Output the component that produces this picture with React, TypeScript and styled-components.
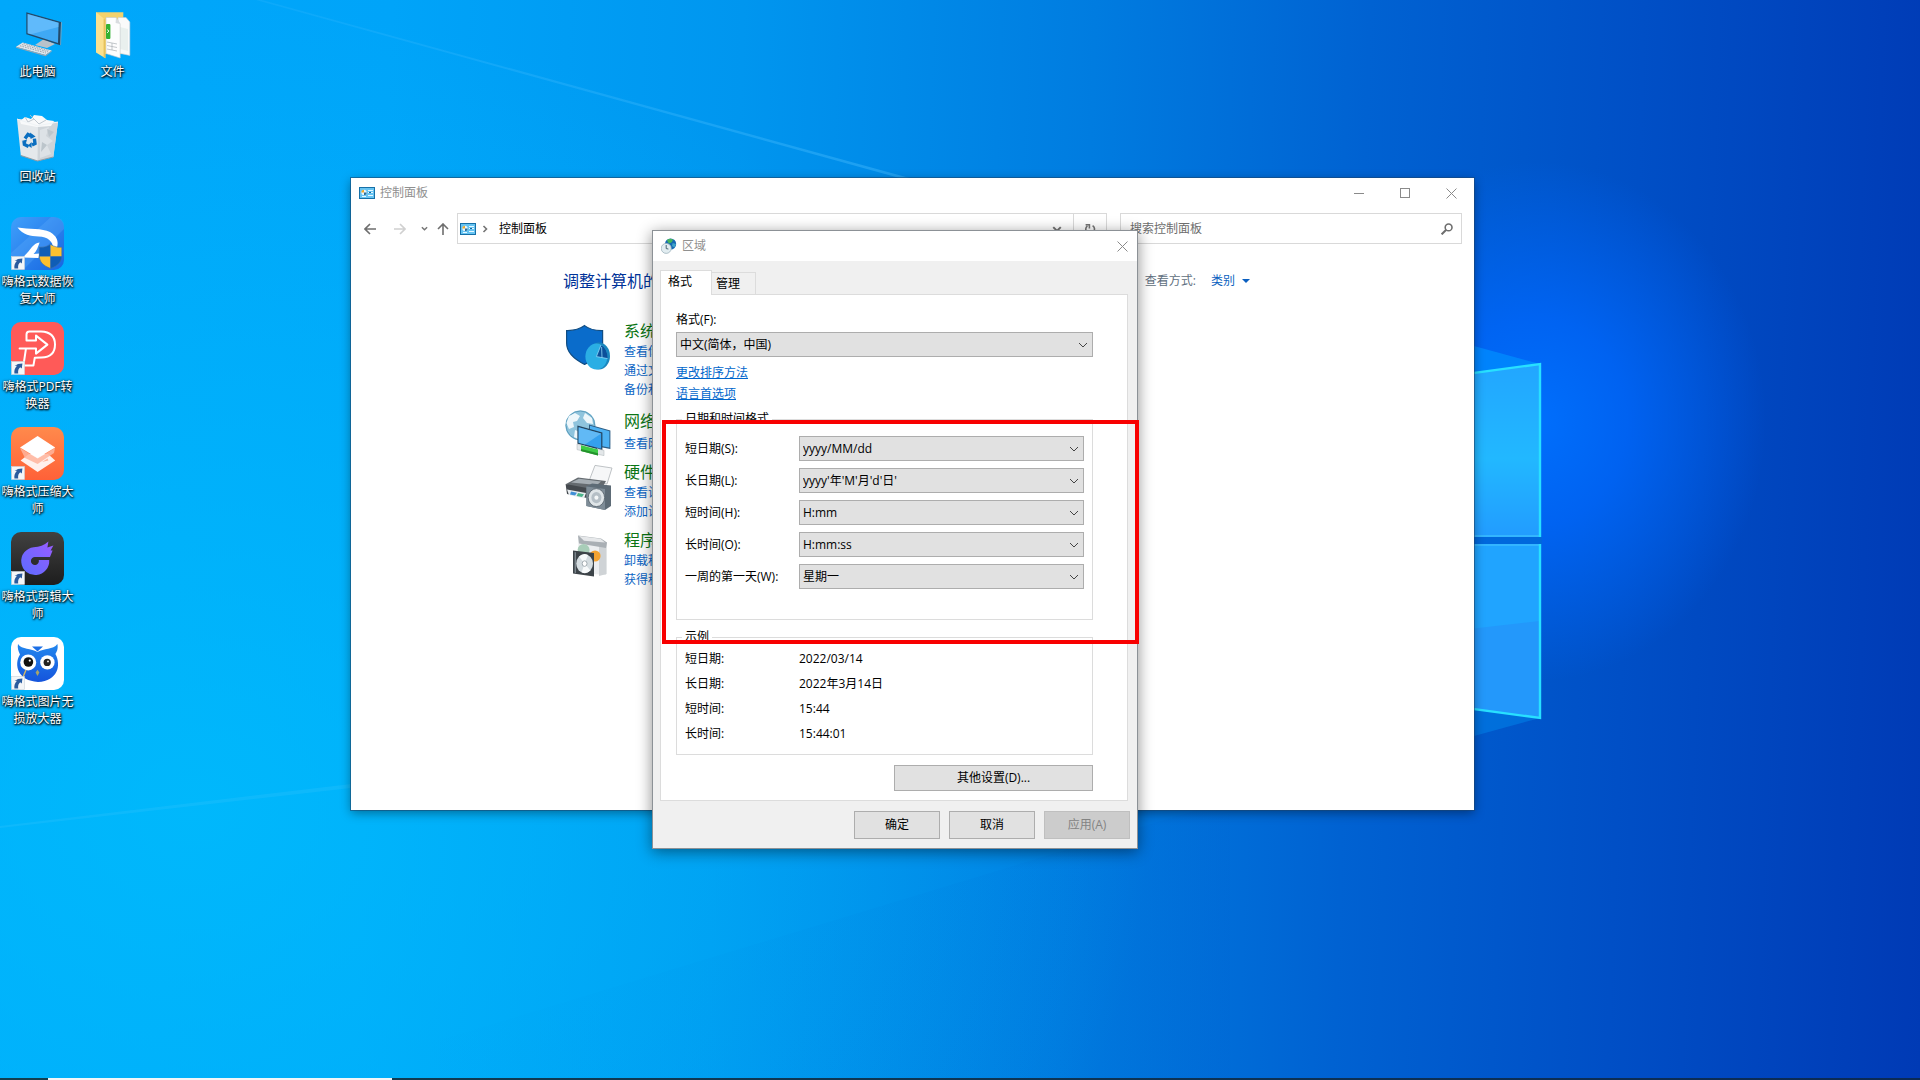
import React from "react";
import styled, { createGlobalStyle, css } from "styled-components";

const GlobalStyle = createGlobalStyle`
  *, *::before, *::after { box-sizing: border-box; }
  body {
    margin: 0;
    font-family: "Open Sans", "Noto Sans CJK SC", sans-serif;
    font-size: 12px;
    line-height: 20px;
    color: #000;
  }
  button, input, select {
    font: inherit;
    color: inherit;
    margin: 0;
    padding: 0;
    border: 0;
    background: none;
    border-radius: 0;
    appearance: none;
    outline: none;
  }
  a { text-decoration: none; }
  svg { display: block; }
`;

/* ---------- desktop ---------- */

const Desktop = styled.main`
  position: relative;
  display: flex;
  flex-direction: column;
  height: 100vh;
  overflow: hidden;
  background:
    radial-gradient(ellipse 230px 260px at 80% 39%, rgba(0, 112, 255, 0.95) 0, rgba(0, 104, 255, 0.75) 40%, rgba(0, 90, 240, 0) 100%),
    radial-gradient(ellipse 50% 75% at 10% 75%, rgba(0, 190, 252, 0.75), rgba(0, 184, 250, 0) 100%),
    linear-gradient(92deg, #00a8fb 0%, #00a4f9 20%, #0096ef 38%, #007ce0 56%, #0062d2 70%, #004fc6 84%, #003ab5 100%);
`;

const Wallpaper = styled.svg`
  position: absolute;
  inset: 0;
  width: 100%;
  height: 100%;
`;

const IconGrid = styled.nav`
  position: relative;
  flex: 1;
  display: grid;
  grid-auto-flow: column;
  grid-template-rows: repeat(7, 105px);
  grid-auto-columns: 75px;
  padding-top: 7px;
`;

const Shortcut = styled.a<{ $column: number }>`
  grid-column: ${(p) => p.$column};
  display: flex;
  flex-direction: column;
  align-items: center;
  gap: 3px;
  color: #fff;
  line-height: 17px;
  text-align: center;
  text-shadow: 1px 1px 2px #000, 0 1px 2px rgba(0, 0, 0, 0.8), 0 0 3px rgba(0, 0, 0, 0.6);
`;

const Taskbar = styled.footer`
  position: relative;
  height: 2px;
  padding-left: 48px;
  background: linear-gradient(90deg, #123f4f, #0b2a55);
`;

const TaskbarSearch = styled.div`
  width: 344px;
  height: 2px;
  background: #f2f6f8;
`;

/* ---------- windows ---------- */

const Window = styled.section`
  position: absolute;
  left: 351px;
  top: 178px;
  width: 1123px;
  min-height: 632px;
  background: #fff;
  box-shadow: 0 0 0 1px rgba(30, 70, 110, 0.55), 0 3px 10px rgba(0, 0, 0, 0.4);
`;

const TitleBar = styled.header<{ $inset: number }>`
  display: flex;
  align-items: center;
  height: 30px;
  padding-left: ${(p) => p.$inset}px;
  background: #fff;
  color: #909090;
`;

const Title = styled.h1`
  flex: 1;
  margin: 0 0 0 5px;
  font-size: 12px;
  font-weight: 400;
`;

const CaptionButton = styled.button<{ $width: number }>`
  display: grid;
  place-items: center;
  width: ${(p) => p.$width}px;
  height: 28px;
`;

const Toolbar = styled.div`
  display: flex;
  align-items: center;
  height: 31px;
  margin: 5px 12px 0 9px;
`;

const NavButton = styled.button<{ $width: number }>`
  display: grid;
  place-items: center;
  width: ${(p) => p.$width}px;
  height: 31px;
`;

const AddressBar = styled.div`
  flex: 1;
  display: flex;
  align-items: center;
  height: 31px;
  margin: 0 13px 0 0;
  padding-left: 2px;
  border: 1px solid #d9d9d9;
`;

const Crumb = styled.a`
  flex: 1;
  margin-left: 5px;
  color: #000;
`;

const BarButton = styled(NavButton)<{ $divided?: boolean }>`
  height: 29px;
  ${(p) => p.$divided && css`border-left: 1px solid #d9d9d9;`}
`;

const SearchBox = styled.label`
  display: flex;
  align-items: center;
  width: 342px;
  height: 31px;
  padding: 0 8px 0 9px;
  border: 1px solid #d9d9d9;
`;

const SearchInput = styled.input`
  flex: 1;
  min-width: 0;
  &::placeholder { color: #6d6d6d; opacity: 1; }
`;

const Content = styled.div`
  padding: 26px 224px 0 212px;
`;

const ContentHead = styled.div`
  display: flex;
  align-items: center;
  justify-content: space-between;
`;

const PageTitle = styled.h2`
  margin: 0;
  font-size: 16px;
  line-height: 22px;
  font-weight: 400;
  color: #003399;
`;

const ViewBy = styled.div`
  display: flex;
  align-items: center;
  gap: 15px;
  color: #5f6f80;
`;

const ViewButton = styled.button`
  display: flex;
  align-items: center;
  gap: 7px;
  color: #0a5fc0;
`;

const CategoryList = styled.ul`
  display: grid;
  gap: 9px;
  margin: 29px 0 0;
  padding: 0;
  list-style: none;
`;

const Category = styled.li`
  display: grid;
  grid-template-columns: 46px 1fr;
  column-gap: 13px;
  align-items: start;
  padding-left: 2px;
`;

const CategoryTitle = styled.a`
  display: block;
  font-size: 16px;
  line-height: 21px;
  color: #0b7514;
`;

const CategoryText = styled.div<{ $loose?: boolean }>`
  ${(p) => p.$loose && css`
    padding-top: 3px;
    ${CategoryTitle} { margin-bottom: 2px; }
  `}
`;

const TaskLink = styled.a`
  display: block;
  line-height: 19px;
  color: #0a64c4;
`;

/* ---------- region dialog ---------- */

const Dialog = styled.section`
  position: absolute;
  left: 652px;
  top: 230px;
  width: 486px;
  border: 1px solid #8c9196;
  background: #f0f0f0;
  box-shadow: 0 3px 14px rgba(0, 0, 0, 0.45);
`;

const TabList = styled.div`
  position: relative;
  display: flex;
  align-items: flex-end;
  padding: 9px 7px 0;
`;

const Tab = styled.button<{ $active?: boolean }>`
  height: 22px;
  padding: 0 15px 0 4px;
  border: 1px solid #dcdcdc;
  border-width: 1px 1px 0 0;
  text-align: left;
  ${(p) => p.$active && css`
    height: 25px;
    margin-bottom: -1px;
    padding: 0 19px 2px 7px;
    border-width: 1px 1px 0 1px;
    background: #fff;
  `}
`;

const TabPanel = styled.div`
  display: flex;
  flex-direction: column;
  margin: 0 9px 0 7px;
  padding: 15px 34px 9px 15px;
  border: 1px solid #dcdcdc;
  background: #fff;
`;

const SelectWrap = styled.span`
  display: grid;
  grid-template-columns: 1fr 20px;
  align-items: center;
  height: 25px;
`;

const Select = styled.select`
  grid-area: 1 / 1 / 2 / 3;
  width: 100%;
  height: 25px;
  padding: 0 20px 0 3px;
  border: 1px solid #adadad;
  background: #e1e1e1;
`;

const SelectArrow = styled.svg`
  grid-area: 1 / 2;
  justify-self: center;
  pointer-events: none;
`;

const LocaleField = styled.div`
  display: grid;
  gap: 2px;
`;

const LinkStack = styled.div`
  display: flex;
  flex-direction: column;
  align-items: flex-start;
  margin-top: 5px;
  line-height: 21px;
`;

const TextLink = styled.a`
  color: #0066cc;
  text-decoration: underline;
`;

const Group = styled.fieldset<{ $gap: number }>`
  min-width: 0;
  margin: ${(p) => p.$gap}px 0 0;
  padding: 0;
  border: 1px solid #dcdcdc;
`;

const Legend = styled.legend`
  margin-left: 5px;
  padding: 0 3px;
  line-height: 16px;
`;

const FormatRows = styled.div`
  display: grid;
  grid-template-columns: 114px 1fr;
  row-gap: 7px;
  align-items: center;
  padding: 9px 8px 30px;
`;

const SampleRows = styled.dl`
  display: grid;
  grid-template-columns: 114px 1fr;
  margin: 0;
  padding: 1px 8px 8px;
  line-height: 25px;
`;

const SampleValue = styled.dd`
  margin: 0;
`;

const PushButton = styled.button<{ $width: number; $height: number }>`
  width: ${(p) => p.$width}px;
  height: ${(p) => p.$height}px;
  border: 1px solid #adadad;
  background: #e1e1e1;
  &:disabled { background: #cccccc; border-color: #bfbfbf; color: #838383; }
`;

const MoreRow = styled.div`
  display: flex;
  justify-content: flex-end;
  margin-top: 10px;
`;

const DialogFooter = styled.footer`
  display: flex;
  justify-content: flex-end;
  gap: 9px;
  padding: 10px 7px 9px;
`;

const Highlight = styled.div`
  position: absolute;
  left: 662px;
  top: 420px;
  width: 477px;
  height: 224px;
  border: 4px solid #f80000;
  pointer-events: none;
`;

/* ---------- drawings ---------- */

const Big = ({ children }: { children: React.ReactNode }) => (
  <svg width="53" height="53" viewBox="0 0 53 53" aria-hidden="true">{children}</svg>
);

const ShortcutBadge = () => (
  <g>
    <rect x="0.5" y="39.5" width="13" height="13" fill="#f4f6f8" stroke="#c9d2da" strokeWidth="0.6" />
    <path d="M3.6 44 L7 42 L11.4 41.4 L10.8 46.4 L9.2 45.2 Q6.6 47.2 7.2 51.4 L3.4 51.4 Q2.8 47 6 43.8 Z" fill="#2a5b9e" />
  </g>
);

const ComputerIcon = () => (
  <Big>
    <path d="M24 38 L33 32 L44 37 L36 41 Z" fill="#b8c2ca" />
    <path d="M15.3 5.3 L50 15 L49.3 38.3 L15.3 27.3 Z" fill="#234a6b" />
    <path d="M16.6 7 L47.6 15.8 L47 36 L16.6 26.2 Z" fill="#3fa9f5" />
    <path d="M16.6 7 L47.6 15.8 L47.4 20 L20 27.3 L16.6 26.2 Z" fill="#7cc8ff" opacity="0.55" />
    <path d="M50 15 L50.8 15.6 L50 38 L49.3 38.3 Z" fill="#8ba5b8" />
    <path d="M5 39.7 L11.7 35.5 L40.7 43.5 L34.5 48 Z" fill="#dfe5ea" />
    <path d="M5 39.7 L34.5 48 L40.7 43.5 L40.7 44.6 L34.5 49.3 L5 40.8 Z" fill="#9aa6b0" />
    <path d="M9 38.8 L35 46 M11 37.6 L37 44.8 M12.6 36.4 L38 43.6" stroke="#95a0a9" strokeWidth="0.9" strokeDasharray="1.6 1" />
  </Big>
);

const FolderIcon = () => (
  <Big>
    <path d="M10 5.3 H37.3 V47 H19 L10 44.7 Z" fill="#f3d26c" />
    <path d="M32 10.5 H40 L43.8 15 V48.4 L32 46 Z" fill="#fafafa" stroke="#c9ccd0" strokeWidth="0.6" />
    <path d="M34 20 L42 22 V44 L34 42 Z" fill="#e9f0ee" />
    <path d="M20 10.5 H30 L34.2 17 V51 L20 46.6 Z" fill="#fdfdfd" stroke="#c4c7cb" strokeWidth="0.6" />
    <path d="M30 10.5 L34.2 17 L29.6 16 Z" fill="#d9dcdf" />
    <rect x="20" y="17" width="4.4" height="15" rx="1" fill="#34b233" />
    <path d="M21 22.5 L23 24 L21 26" stroke="#fff" strokeWidth="0.9" fill="none" />
    <path d="M21 35 L31 37 M21 38.5 L31 40.5 M21 42 L31 44 M26 36 V43" stroke="#aab0b5" strokeWidth="0.7" />
    <path d="M10 5.3 L19.4 12.8 V51.3 L10 45.5 Z" fill="#fbe18f" />
    <path d="M19.4 12.8 V51.3 L17.6 50.2 V11.4 Z" fill="#e6c25c" />
  </Big>
);

const RecycleIcon = () => (
  <Big>
    <path d="M6 7 L47 10 L42.3 45 L26.5 49 L9.8 43.5 Z" fill="#e4e8eb" />
    <path d="M27 13 L47 10 L42.3 45 L26.5 49 Z" fill="#ced4d9" />
    <path d="M29 18 L38 15 L35 24 L42 29 L36 33 L40 42 L29 46 Z" fill="#dde2e6" />
    <path d="M31 30 L36 33 L30 40 Z M36 17 L43 20 L38 25 Z" fill="#bcc5cb" />
    <path d="M9 9 L14 5 L20 7 L23 3 L31 4 L36 8 L43 9 L40 14 L26 15 L10 12 Z" fill="#f8f9fa" />
    <path d="M14 5 L17 10 L23 7 L28 12 L35 8 M19 3 L23 7" stroke="#b9c2c9" strokeWidth="0.9" fill="none" />
    <path d="M6 7 L26.5 13.8 L47 10" stroke="#eef3f6" strokeWidth="1" fill="none" />
    <path d="M9.8 43.5 L26.5 49 L42.3 45" stroke="#8f9ca6" strokeWidth="1.2" fill="none" />
    <g fill="none" stroke="#0c6fc0" strokeWidth="3.4">
      <path d="M14 26.5 L17 22.4 L20.6 24.2" />
      <path d="M23.4 26.6 L24 31.6 L21 33" />
      <path d="M17.6 34.6 L13.4 32.4 L13 29.4" />
    </g>
    <path d="M19 20.4 L24.6 24.6 L19.6 27 Z M20.6 30 L20.6 36 L17 33.4 Z M10.6 29 L16 27.6 L15 31 Z" fill="#0c6fc0" />
  </Big>
);

const DataRecoveryIcon = () => (
  <Big>
    <defs>
      <linearGradient id="drBg" x1="0" y1="0" x2="1" y2="1">
        <stop offset="0" stopColor="#3fa0fb" />
        <stop offset="1" stopColor="#1765e0" />
      </linearGradient>
    </defs>
    <rect width="53" height="53" rx="10" fill="url(#drBg)" />
    <path d="M0 36 L40 0 H43 Q53 0 53 10 V12 L12 53 H10 Q0 53 0 43 Z" fill="#6bb8ff" opacity="0.25" />
    <path d="M6.5 10.5 C18 12.4 31 11 39 15 C45.5 19 48 23.5 46 31 L42 31 C42 24.5 37 19.6 27.6 19.4 C19.6 19.2 12 18 6.5 10.5 Z" fill="#fff" />
    <path d="M28.6 25.4 C21 26.4 20.4 33 11.6 40.4 L27.4 41 L28.4 36.6 L22.6 37 C25.6 34 27 30 28.6 25.4 Z" fill="#fff" />
    <path d="M39.5 27.4 C36 29.8 32 30.4 28.3 30.2 V39.5 H39.5 Z" fill="#0f5db6" />
    <path d="M39.5 27.4 C43 29.8 47 30.4 50.8 30.2 V39.5 H39.5 Z" fill="#fcc02f" />
    <path d="M28.3 39.5 H39.5 V51.4 C32 48.6 28.6 45 28.3 39.5 Z" fill="#fcc02f" />
    <path d="M50.8 39.5 H39.5 V51.4 C47 48.6 50.4 45 50.8 39.5 Z" fill="#0f5db6" />
    <path d="M39.5 27.4 C43 29.8 47 30.4 50.8 30.2 V39 C50.4 45 47 48.6 39.5 51.4 C32 48.6 28.6 45 28.3 39 V30.2 C32 30.4 36 29.8 39.5 27.4 Z" fill="none" stroke="#3f6f9c" strokeWidth="0.6" />
    <ShortcutBadge />
  </Big>
);

const PdfIcon = () => (
  <Big>
    <rect width="53" height="53" rx="10" fill="#ff5a58" />
    <path
      d="M15.5 18.5 V12.5 Q15.5 9.5 18.5 9.5 H30 Q44 10 44 22.5 Q44 35 30.5 35.6 L23.8 35.8 L22.4 43.6 H12.4 L15 26.4 H8.6 M15.5 18.5 H25 V13.6 L36.4 22.6 L25 31.6 V26.6 H15"
      fill="none" stroke="#fff" strokeWidth="2" strokeLinejoin="round" strokeLinecap="round"
    />
    <ShortcutBadge />
  </Big>
);

const CompressIcon = () => (
  <Big>
    <defs>
      <linearGradient id="cpBg" x1="0" y1="0" x2="0" y2="1">
        <stop offset="0" stopColor="#ff8a4c" />
        <stop offset="1" stopColor="#ff6138" />
      </linearGradient>
    </defs>
    <rect width="53" height="53" rx="10" fill="url(#cpBg)" />
    <path d="M9.6 33.4 L18 27 H37 L44.2 33.4 L26.6 45 Z" fill="#fff" opacity="0.9" />
    <path d="M9 21 L26.6 31.6 L44 21 L43 26 L26.6 37 L14 31 Z" fill="#ffb49c" opacity="0.85" />
    <path d="M31 35 L36.6 31.4 L37.4 33.6 Z" fill="#ffb49c" />
    <path d="M26.6 9 L44.2 20.4 L26.6 31 L9 20.4 Z" fill="#fff" />
    <ShortcutBadge />
  </Big>
);

const EditIcon = () => (
  <Big>
    <defs>
      <linearGradient id="edBg" x1="0" y1="0" x2="0" y2="1">
        <stop offset="0" stopColor="#414141" />
        <stop offset="1" stopColor="#1d1d1d" />
      </linearGradient>
      <linearGradient id="edFg" x1="1" y1="0" x2="0" y2="1">
        <stop offset="0" stopColor="#9a5cff" />
        <stop offset="1" stopColor="#5b6cff" />
      </linearGradient>
    </defs>
    <rect width="53" height="53" rx="10" fill="url(#edBg)" />
    <path
      d="M39 25 H24.4 A4 4 0 1 0 27.8 28 H38.2 A14 14 0 1 1 22.6 15.2 C28.6 15.2 33 13.4 37.4 9.6 L36.4 15.6 L42.4 13.4 L39.6 18.6 L41.6 18.4 Z"
      fill="url(#edFg)"
    />
    <ShortcutBadge />
  </Big>
);

const OwlIcon = () => (
  <Big>
    <defs>
      <linearGradient id="owl" x1="0" y1="0" x2="0" y2="1">
        <stop offset="0" stopColor="#2287ee" />
        <stop offset="1" stopColor="#1554dc" />
      </linearGradient>
    </defs>
    <rect width="53" height="53" rx="10" fill="#fff" />
    <path d="M7 7 C11 13 20 11 26.5 15 C33 11 42 13 46.4 7 C47.4 12 45.6 15 44.4 17 C50.4 28 47 44 27 45 C7 44 2.4 28 9 17.6 C7.4 14 6.2 11 7 7 Z" fill="url(#owl)" />
    <path d="M21 9.4 H32 L26.5 14.6 Z" fill="#1b6fe6" />
    <circle cx="17.2" cy="25.4" r="8" fill="#fff" />
    <circle cx="36.4" cy="25.4" r="7.2" fill="#fff" />
    <circle cx="17.4" cy="25" r="4.8" fill="#111" />
    <circle cx="36.2" cy="25.4" r="3.6" fill="#222" />
    <circle cx="18.8" cy="23.6" r="1.1" fill="#fff" />
    <circle cx="37" cy="24.4" r="0.9" fill="#fff" />
    <path d="M26.5 32.8 L28.4 35.6 L26.5 39 L24.6 35.6 Z" fill="#a8a46a" />
    <path d="M15 33 L12 40" stroke="#d6b865" strokeWidth="1.4" />
    <ShortcutBadge />
  </Big>
);

const PanelIcon = () => (
  <svg width="16" height="12" viewBox="0 0 16 12" aria-hidden="true">
    <rect x="0.5" y="0.5" width="15" height="11" fill="#67c4f2" stroke="#1670a8" />
    <circle cx="5" cy="5.4" r="2.6" fill="#e8f6fd" />
    <path d="M5 5.4 V2.8 A2.6 2.6 0 0 0 2.4 5.4 Z" fill="#f0a92e" />
    <path d="M5 5.4 H7.6 A2.6 2.6 0 0 1 5 8 Z" fill="#2c6c97" />
    <path d="M9 3.5 H14 M9 5.5 H14 M3 9.5 H7 M9 8.5 H14" stroke="#e8f8ff" />
    <path d="M10 5.5 H12" stroke="#14649c" />
  </svg>
);

const RegionIcon = () => (
  <svg width="16" height="16" viewBox="0 0 16 16" aria-hidden="true">
    <circle cx="9.6" cy="6" r="5.6" fill="#1668b4" />
    <path d="M6 2 Q9 -0.4 12 1.4 L11 4 L8.6 5.4 L7 4.4 Z" fill="#45b55b" />
    <path d="M11.6 5 L15 6 L13.4 9.6 L11 8 Z" fill="#3fa4c8" />
    <circle cx="5.2" cy="10.4" r="5" fill="#e2edf1" stroke="#9db3bd" strokeWidth="0.8" />
    <path d="M5.2 7 V10.6 L7.4 11" stroke="#4a6572" strokeWidth="1" fill="none" />
  </svg>
);

const SecurityIcon = () => (
  <svg width="46" height="52" viewBox="0 0 46 52" aria-hidden="true">
    <path d="M1.6 9.6 C9 9.8 15 8 19.6 4.6 C24 8 30 9.8 37.6 9.6 V22 C37.6 32 29 38.6 19.6 43.4 C10 38.6 1.6 32 1.6 22 Z" fill="#0a6ccb" stroke="#124d82" strokeWidth="1.2" />
    <ellipse cx="34" cy="35" rx="11" ry="13.4" fill="#1b86bd" />
    <ellipse cx="31.4" cy="35.6" rx="11" ry="13" fill="#2aaee4" />
    <path d="M31.4 35.6 L36 24 C40 26 42.6 31 42.6 37.6 Z" fill="#0c4f9a" />
    <path d="M36 24 L31.4 35.6 L42.6 37.6 M36.6 26 L37 36.6" stroke="#8fd8f7" strokeWidth="0.8" fill="none" />
  </svg>
);

const NetworkIcon = () => (
  <svg width="46" height="45" viewBox="0 -2 46 45" overflow="visible" aria-hidden="true">
    <circle cx="15.4" cy="15.4" r="15" fill="#8fc4dd" />
    <circle cx="15.4" cy="15.4" r="14.4" fill="none" stroke="#5b9cbc" strokeWidth="1" />
    <path d="M4 6 L10 3 L15 6 L12 11 L8 12 L9 17 L4 19 L1.4 13 Z M10 20 L15 22 L13 29 L9 27 Z M20 3 L27 8 L28 14 L22 13 L18 8 Z" fill="#eef7fb" />
    <path d="M24 14.4 L45.4 20.4 V39 L24 35 Z" fill="#2d5d84" />
    <path d="M25 15.8 L44.4 21.2 V37.6 L25 34 Z" fill="#4db1f2" />
    <path d="M12.4 15.6 L37.4 22.6 V40.4 L12.4 33.8 Z" fill="#24455f" />
    <path d="M13.6 17.2 L36.2 23.6 V38.8 L13.6 32.8 Z" fill="#35a0ee" />
    <path d="M13.6 17.2 L36.2 23.6 L20 34.4 L13.6 32.8 Z" fill="#7fcafa" opacity="0.6" />
    <path d="M12 34 L20 36.2 V41.6 L12 39.6 Z M32 38.6 L39 40.4 V45.6 L32 44.2 Z" fill="#e3e7e9" stroke="#a9b1b5" strokeWidth="0.5" />
    <path d="M16 35.2 L33 39.4 V45.4 L16 41 Z" fill="#3ecb46" />
    <path d="M16 39 L33 43.2 V45.4 L16 41 Z" fill="#25922d" />
  </svg>
);

const HardwareIcon = () => (
  <svg width="46" height="50" viewBox="0 0 46 50" overflow="visible" aria-hidden="true">
    <path d="M30 3.4 L47 6 L42 22 L24 19 Z" fill="#f6f7f8" stroke="#aeb4b8" strokeWidth="0.8" />
    <path d="M1 22 L13 15.6 L41 19 L36 28 L12 27.6 Z" fill="#656b70" />
    <path d="M6 20.6 L14 16.8 L36 19.6 L32 23 Z" fill="#a5adb3" />
    <path d="M0.6 22 L22 26 V36 L2 32 Z" fill="#44494e" />
    <path d="M2 27.4 L21 31 L19 36.4 L4 33 Z" fill="#e9edf0" />
    <path d="M6 29.6 L12 30.8 L10 33.6 L5 32.6 Z" fill="#3f8fd6" />
    <path d="M13 31 L19 32.2 L17 35 L11.6 34 Z" fill="#4bb48a" />
    <path d="M21.4 24.4 L27 21.4 L46 23.4 V44 L40 48 L21.4 44 Z" fill="#5d6b76" />
    <path d="M21.4 24.4 L40 27 V48 L21.4 44 Z" fill="#7e8c97" />
    <ellipse cx="31.4" cy="35.6" rx="8.2" ry="9" fill="#dfe5e8" stroke="#505c66" strokeWidth="0.8" />
    <ellipse cx="31.4" cy="35.6" rx="5" ry="5.6" fill="#b5bfc6" />
    <ellipse cx="31.4" cy="35.6" rx="2" ry="2.2" fill="#f4f7f8" />
  </svg>
);

const ProgramsIcon = () => (
  <svg width="46" height="50" viewBox="0 0 46 50" aria-hidden="true">
    <path d="M13 6 L19 11 L41 12 V45 L14 43 Z" fill="#eceef0" />
    <path d="M34 12 H41.6 V44 L34 46 Z" fill="#cfd3d6" />
    <path d="M13 5.6 L36 8.6 L42 12.6 L41 18 L14 13.6 Z" fill="#a9afb4" />
    <path d="M14 6 L35.6 8.8 L40 12.4 L19 10.8 Z" fill="#e6e8ea" />
    <circle cx="18.6" cy="20" r="6" fill="#a8cdb8" />
    <circle cx="30" cy="26" r="5.6" fill="#f5a331" />
    <path d="M8 20.4 L29 23 V46.6 L8 43.6 Z" fill="#3d4449" />
    <path d="M9.6 22 L11 22.2 V43 L9.6 42.8 Z" fill="#7b858c" />
    <ellipse cx="19.6" cy="33.6" rx="8.4" ry="9.4" fill="#d5dde1" />
    <path d="M19.6 33.6 L14 26.6 A8.4 9.4 0 0 1 23 25 Z M19.6 33.6 L25.4 40.6 A8.4 9.4 0 0 1 16.6 42.4 Z" fill="#f7fafb" />
    <ellipse cx="19.6" cy="33.6" rx="2.4" ry="2.8" fill="#fff" stroke="#8f9aa1" strokeWidth="0.8" />
  </svg>
);

const Close = () => (
  <svg width="11" height="11" viewBox="0 0 11 11" aria-hidden="true">
    <path d="M0.5 0.5 L10.5 10.5 M10.5 0.5 L0.5 10.5" stroke="#8a8a8a" fill="none" />
  </svg>
);

const NavArrow = ({ turn, color }: { turn: number; color: string }) => (
  <svg width="12" height="12" viewBox="0 0 12 12" aria-hidden="true">
    <path d="M12 6 H1.2 M6 1 L1 6 L6 11" stroke={color} strokeWidth="1.6" fill="none" transform={`rotate(${turn} 6 6)`} />
  </svg>
);

const ThickChevron = ({ size, turn = 0 }: { size: number; turn?: number }) => (
  <svg width={size} height={size} viewBox="0 0 8 8" aria-hidden="true">
    <path d="M1 2.5 L4 5.5 L7 2.5" stroke="#747474" strokeWidth="1.6" fill="none" transform={`rotate(${turn} 4 4)`} />
  </svg>
);

/* ---------- data ---------- */

const shortcuts = [
  { label: "此电脑", column: 1, Icon: ComputerIcon },
  { label: "回收站", column: 1, Icon: RecycleIcon },
  { label: "嗨格式数据恢复大师", column: 1, Icon: DataRecoveryIcon },
  { label: "嗨格式PDF转换器", column: 1, Icon: PdfIcon },
  { label: "嗨格式压缩大师", column: 1, Icon: CompressIcon },
  { label: "嗨格式剪辑大师", column: 1, Icon: EditIcon },
  { label: "嗨格式图片无损放大器", column: 1, Icon: OwlIcon },
  { label: "文件", column: 2, Icon: FolderIcon },
];

const categories = [
  { title: "系统和安全", links: ["查看你的计算机状态", "通过文件历史记录保存你的文件备份副本", "备份和还原"], Icon: SecurityIcon },
  { title: "网络和 Internet", links: ["查看网络状态和任务"], Icon: NetworkIcon, loose: true },
  { title: "硬件和声音", links: ["查看设备和打印机", "添加设备"], Icon: HardwareIcon },
  { title: "程序", links: ["卸载程序", "获得程序"], Icon: ProgramsIcon },
];

const formats = [
  { id: "short-date", label: "短日期(S):", value: "yyyy/MM/dd" },
  { id: "long-date", label: "长日期(L):", value: "yyyy'年'M'月'd'日'" },
  { id: "short-time", label: "短时间(H):", value: "H:mm" },
  { id: "long-time", label: "长时间(O):", value: "H:mm:ss" },
  { id: "first-day", label: "一周的第一天(W):", value: "星期一" },
];

const samples = [
  ["短日期:", "2022/03/14"],
  ["长日期:", "2022年3月14日"],
  ["短时间:", "15:44"],
  ["长时间:", "15:44:01"],
];

/* ---------- parts ---------- */

const DropDown = ({ id, value }: { id: string; value: string }) => (
  <SelectWrap>
    <Select id={id} defaultValue={value}>
      <option value={value}>{value}</option>
    </Select>
    <SelectArrow width="10" height="6" viewBox="0 0 10 6" aria-hidden="true">
      <path d="M1 1 L5 5 L9 1" stroke="#444" fill="none" />
    </SelectArrow>
  </SelectWrap>
);

const WallpaperArt = () => (
  <Wallpaper viewBox="0 0 1920 1080" preserveAspectRatio="xMidYMid slice" aria-hidden="true">
    <defs>
      <linearGradient id="beam" x1="0" y1="0" x2="1" y2="0">
        <stop offset="0" stopColor="#4fc0ff" stopOpacity="0.15" />
        <stop offset="1" stopColor="#4fc0ff" stopOpacity="0.6" />
      </linearGradient>
      <linearGradient id="below" x1="0" y1="0" x2="1" y2="0">
        <stop offset="0" stopColor="#0070d0" stopOpacity="0.02" />
        <stop offset="1" stopColor="#0058c8" stopOpacity="0.2" />
      </linearGradient>
      <linearGradient id="paneTop" x1="0" y1="0" x2="0" y2="1">
        <stop offset="0" stopColor="#22a6ff" />
        <stop offset="0.55" stopColor="#22b8ff" />
        <stop offset="1" stopColor="#229cff" />
      </linearGradient>
    </defs>
    <path d="M262 0 L1474 333 V337 L256 0 Z" fill="url(#beam)" />
    <path d="M440 1040 L1230 800 V1080 H440 Z" fill="url(#below)" opacity="0.4" />
    <path d="M0 826 L351 784 V788 L0 828 Z" fill="#5fd0ff" opacity="0.15" />
    <path d="M1474 346 L1540 364 L1474 375 Z" fill="#0090ff" opacity="0.7" />
    <path d="M1474 736 L1540 718 L1474 707 Z" fill="#007ee6" opacity="0.6" />
    <path d="M1400 383 L1540 364 V536 H1400 Z" fill="url(#paneTop)" />
    <path d="M1400 545 H1540 V718 L1400 699 Z" fill="#2398fb" />
    <path d="M1400 545 H1540 V621 L1400 637 Z" fill="#20a4ff" />
    <path d="M1400 536 H1540 M1400 545 H1540" stroke="#33b5ff" strokeWidth="2" />
    <path d="M1400 383 L1540 364 V537 M1540 544 V718 L1400 699" stroke="#28e0ff" strokeWidth="2.4" fill="none" />
    <path d="M1400 537 H1542 V544 H1400 Z" fill="#0068dc" />
  </Wallpaper>
);

const ControlPanel = () => (
  <Window aria-label="控制面板">
    <TitleBar $inset={8}>
      <PanelIcon />
      <Title>控制面板</Title>
      <CaptionButton $width={46} aria-label="最小化">
        <svg width="10" height="10" viewBox="0 0 10 10"><path d="M0 5.5 H10" stroke="#8a8a8a" /></svg>
      </CaptionButton>
      <CaptionButton $width={46} aria-label="最大化">
        <svg width="10" height="10" viewBox="0 0 10 10"><rect x="0.5" y="0.5" width="9" height="9" fill="none" stroke="#8a8a8a" /></svg>
      </CaptionButton>
      <CaptionButton $width={46} aria-label="关闭"><Close /></CaptionButton>
    </TitleBar>
    <Toolbar>
      <NavButton $width={20} aria-label="后退"><NavArrow turn={0} color="#6e6e6e" /></NavButton>
      <NavButton $width={40} aria-label="前进"><NavArrow turn={180} color="#d0d0d0" /></NavButton>
      <NavButton $width={8} aria-label="最近的位置"><ThickChevron size={7} /></NavButton>
      <NavButton $width={29} aria-label="上移"><NavArrow turn={90} color="#6e6e6e" /></NavButton>
      <AddressBar>
        <PanelIcon />
        <NavButton $width={18} aria-label="展开"><ThickChevron size={8} turn={-90} /></NavButton>
        <Crumb href="#">控制面板</Crumb>
        <BarButton $width={32} aria-label="以前的位置"><ThickChevron size={10} /></BarButton>
        <BarButton $width={33} $divided aria-label="刷新">
          <svg width="12" height="12" viewBox="0 0 12 12">
            <path d="M8.6 2.6 A4.4 4.4 0 1 1 3.4 2.8 M1.6 1.8 H5.4 V5.4" stroke="#747474" strokeWidth="1.6" fill="none" />
          </svg>
        </BarButton>
      </AddressBar>
      <SearchBox>
        <SearchInput type="text" placeholder="搜索控制面板" aria-label="搜索控制面板" />
        <svg width="12" height="12" viewBox="0 0 12 12" aria-hidden="true">
          <circle cx="7.6" cy="4.4" r="3.4" fill="none" stroke="#6e6e6e" strokeWidth="1.6" />
          <path d="M5.2 6.8 L0.6 11.4" stroke="#6e6e6e" strokeWidth="2" />
        </svg>
      </SearchBox>
    </Toolbar>
    <Content>
      <ContentHead>
        <PageTitle>调整计算机的设置</PageTitle>
        <ViewBy>
          查看方式:
          <ViewButton>
            类别
            <svg width="8" height="4" viewBox="0 0 8 4" aria-hidden="true"><path d="M0 0 H8 L4 4 Z" fill="#0a5fc0" /></svg>
          </ViewButton>
        </ViewBy>
      </ContentHead>
      <CategoryList>
        {categories.map(({ title, links, Icon, loose }) => (
          <Category key={title}>
            <Icon />
            <CategoryText $loose={loose}>
              <CategoryTitle href="#">{title}</CategoryTitle>
              {links.map((link) => (
                <TaskLink href="#" key={link}>{link}</TaskLink>
              ))}
            </CategoryText>
          </Category>
        ))}
      </CategoryList>
    </Content>
  </Window>
);

const RegionDialog = () => (
  <Dialog role="dialog" aria-label="区域">
    <TitleBar $inset={8}>
      <RegionIcon />
      <Title>区域</Title>
      <CaptionButton $width={30} aria-label="关闭"><Close /></CaptionButton>
    </TitleBar>
    <TabList role="tablist">
      <Tab role="tab" aria-selected="true" $active>格式</Tab>
      <Tab role="tab" aria-selected="false">管理</Tab>
    </TabList>
    <TabPanel role="tabpanel">
      <LocaleField>
        <label htmlFor="locale">格式(F):</label>
        <DropDown id="locale" value="中文(简体，中国)" />
      </LocaleField>
      <LinkStack>
        <TextLink href="#">更改排序方法</TextLink>
        <TextLink href="#">语言首选项</TextLink>
      </LinkStack>
      <Group $gap={7}>
        <Legend>日期和时间格式</Legend>
        <FormatRows>
          {formats.map((f) => (
            <React.Fragment key={f.id}>
              <label htmlFor={f.id}>{f.label}</label>
              <DropDown id={f.id} value={f.value} />
            </React.Fragment>
          ))}
        </FormatRows>
      </Group>
      <Group $gap={9}>
        <Legend>示例</Legend>
        <SampleRows>
          {samples.map(([name, value]) => (
            <React.Fragment key={name}>
              <dt>{name}</dt>
              <SampleValue>{value}</SampleValue>
            </React.Fragment>
          ))}
        </SampleRows>
      </Group>
      <MoreRow>
        <PushButton $width={199} $height={26}>其他设置(D)...</PushButton>
      </MoreRow>
    </TabPanel>
    <DialogFooter>
      <PushButton $width={86} $height={28}>确定</PushButton>
      <PushButton $width={86} $height={28}>取消</PushButton>
      <PushButton $width={86} $height={28} disabled>应用(A)</PushButton>
    </DialogFooter>
  </Dialog>
);

export default function App() {
  return (
    <>
      <GlobalStyle />
      <Desktop>
        <WallpaperArt />
        <IconGrid aria-label="桌面">
          {shortcuts.map(({ label, column, Icon }) => (
            <Shortcut href="#" key={label} $column={column}>
              <Icon />
              {label}
            </Shortcut>
          ))}
        </IconGrid>
        <Taskbar><TaskbarSearch /></Taskbar>
        <ControlPanel />
        <RegionDialog />
        <Highlight />
      </Desktop>
    </>
  );
}
